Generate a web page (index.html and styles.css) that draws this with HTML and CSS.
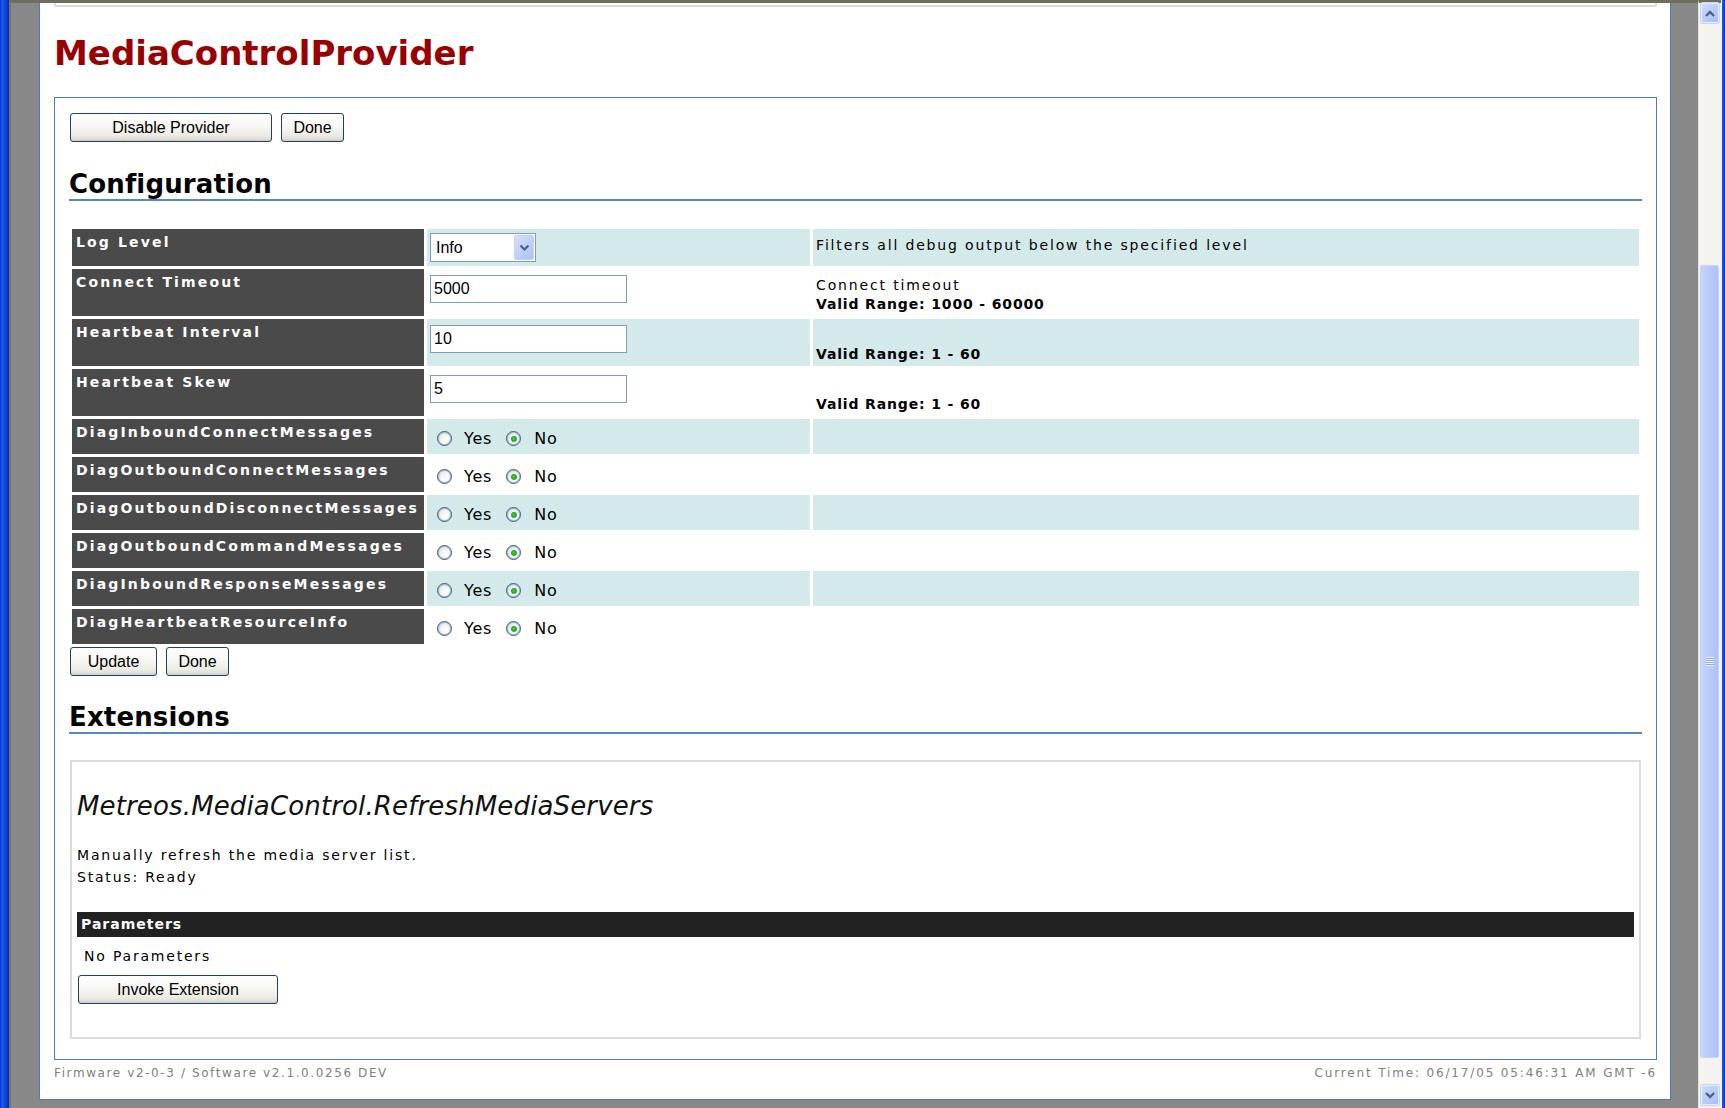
FILE: index.html
```html
<!DOCTYPE html>
<html>
<head>
<meta charset="utf-8">
<title>MediaControlProvider</title>
<link rel="stylesheet" href="styles.css">
</head>
<body>
<div class="win">
  <div class="frame-l"></div>
  <div class="viewport">
    <div class="page">
      <div class="prev-box"></div>
      <h1 class="title">MediaControlProvider</h1>
      <div class="panel">
        <div class="btn-row">
          <button class="xp-btn w-disable">Disable Provider</button>
          <button class="xp-btn w-done">Done</button>
        </div>
        <h2 class="section">Configuration</h2>
        <table class="config">
          <colgroup><col class="c-label"><col class="c-value"><col class="c-desc"></colgroup>
          <tr class="alt">
            <th>Log Level</th>
            <td class="val"><div class="select"><span class="sel-text">Info</span><span class="sel-btn"><svg width="11" height="8" viewBox="0 0 11 8"><path d="M1.5 1.5 L5.5 5.5 L9.5 1.5" fill="none" stroke="#4d6185" stroke-width="2.2"/></svg></span></div></td>
            <td class="desc">Filters all debug output below the specified level</td>
          </tr>
          <tr>
            <th>Connect Timeout</th>
            <td class="val"><input class="txt" type="text" value="5000"></td>
            <td class="desc">Connect timeout<br><b>Valid Range: 1000 - 60000</b></td>
          </tr>
          <tr class="alt">
            <th>Heartbeat Interval</th>
            <td class="val"><input class="txt" type="text" value="10"></td>
            <td class="desc"><br><b>Valid Range: 1 - 60</b></td>
          </tr>
          <tr>
            <th>Heartbeat Skew</th>
            <td class="val"><input class="txt" type="text" value="5"></td>
            <td class="desc"><br><b>Valid Range: 1 - 60</b></td>
          </tr>
          <tr class="alt">
            <th>DiagInboundConnectMessages</th>
            <td class="val rad"><div class="radios"><span class="radio first"></span><span class="opt">Yes</span><span class="radio on"></span><span class="opt">No</span></div></td>
            <td class="desc"></td>
          </tr>
          <tr>
            <th>DiagOutboundConnectMessages</th>
            <td class="val rad"><div class="radios"><span class="radio first"></span><span class="opt">Yes</span><span class="radio on"></span><span class="opt">No</span></div></td>
            <td class="desc"></td>
          </tr>
          <tr class="alt">
            <th>DiagOutboundDisconnectMessages</th>
            <td class="val rad"><div class="radios"><span class="radio first"></span><span class="opt">Yes</span><span class="radio on"></span><span class="opt">No</span></div></td>
            <td class="desc"></td>
          </tr>
          <tr>
            <th>DiagOutboundCommandMessages</th>
            <td class="val rad"><div class="radios"><span class="radio first"></span><span class="opt">Yes</span><span class="radio on"></span><span class="opt">No</span></div></td>
            <td class="desc"></td>
          </tr>
          <tr class="alt">
            <th>DiagInboundResponseMessages</th>
            <td class="val rad"><div class="radios"><span class="radio first"></span><span class="opt">Yes</span><span class="radio on"></span><span class="opt">No</span></div></td>
            <td class="desc"></td>
          </tr>
          <tr>
            <th>DiagHeartbeatResourceInfo</th>
            <td class="val rad"><div class="radios"><span class="radio first"></span><span class="opt">Yes</span><span class="radio on"></span><span class="opt">No</span></div></td>
            <td class="desc"></td>
          </tr>
        </table>
        <div class="btn-row">
          <button class="xp-btn w-update">Update</button>
          <button class="xp-btn w-done2">Done</button>
        </div>
        <h2 class="section ext-head">Extensions</h2>
        <div class="ext">
          <div class="ext-title">Metreos.MediaControl.RefreshMediaServers</div>
          <div class="ext-desc">Manually refresh the media server list.<br>Status: Ready</div>
          <div class="param-bar">Parameters</div>
          <div class="no-params">No Parameters</div>
          <button class="xp-btn w-invoke">Invoke Extension</button>
        </div>
      </div>
      <div class="footer">
        <span class="f-left">Firmware v2-0-3 / Software v2.1.0.0256 DEV</span>
        <span class="f-right">Current Time: 06/17/05 05:46:31 AM GMT -6</span>
      </div>
    </div>
  </div>
  <div class="scrollbar">
    <div class="sb-btn"><svg width="12" height="9" viewBox="0 0 12 9"><path d="M2 7 L6 3 L10 7" fill="none" stroke="#4d6185" stroke-width="2.4"/></svg></div>
    <div class="sb-thumb"><span class="grip"></span></div>
    <div class="sb-fill"></div>
    <div class="sb-btn down"><svg width="12" height="9" viewBox="0 0 12 9"><path d="M2 2 L6 6 L10 2" fill="none" stroke="#4d6185" stroke-width="2.4"/></svg></div>
  </div>
  <div class="frame-r"></div>
</div>
</body>
</html>
```

FILE: styles.css
```css
* { box-sizing: border-box; }
html, body { margin: 0; padding: 0; }
body {
  width: 1725px;
  height: 1108px;
  overflow: hidden;
  font-family: "DejaVu Sans", Verdana, sans-serif;
  color: #000;
  background: #888;
}
.win { display: flex; height: 1108px; }

.frame-l {
  width: 9px;
  background: linear-gradient(90deg, #0a2fc0 0, #1a5cf0 2px, #0d47e6 5px, #0a30c8 8px, #082a9e 9px);
}
.frame-r {
  width: 4px;
  background: linear-gradient(90deg, #f2f1ea 0, #f2f1ea 1px, #1d5ae8 1px, #0a35cc 4px);
}

.viewport {
  width: 1689px;
  background: #888;
  border-top: 3px solid #6f6d5d;
  border-left: 2px solid #76745f;
}

.page {
  margin-left: 28px;
  width: 1632px;
  background: #fff;
  border: 1px solid #4b7bc1;
  border-top: none;
}

.prev-box {
  margin: 0 13px 0 14px;
  height: 4px;
  border: 2px solid #dddddd;
  border-top: none;
}

.title {
  margin: 26px 0 0 14px;
  font-family: "DejaVu Sans", Verdana, sans-serif;
  font-weight: bold;
  font-size: 34px;
  line-height: 40px;
  color: #990000;
}

.panel {
  margin: 24px 13px 0 14px;
  border: 1px solid #4b7bc1;
  padding: 15px 15px 20px;
}

.btn-row { display: flex; gap: 9px; height: 29px; }

.xp-btn {
  height: 29px;
  padding: 0;
  border: 1px solid #1f3f6e;
  border-radius: 3px;
  background: linear-gradient(180deg, #ffffff 0%, #f7f7f3 45%, #ecebe3 80%, #d9d6cb 100%);
  font-family: "Liberation Sans", Arial, sans-serif;
  font-size: 16px;
  color: #000;
  box-shadow: inset 0 -1px 0 #d0cdc0;
}
.w-disable { width: 202px; }
.w-done { width: 63px; }
.w-update { width: 87px; }
.w-done2 { width: 63px; }
.w-invoke { width: 200px; margin: 9px 0 0 1px; display: block; }

.section {
  margin: 27px -1px 0;
  font-family: "DejaVu Sans", Verdana, sans-serif;
  font-weight: bold;
  font-size: 26px;
  line-height: 30px;
  letter-spacing: 0.15px;
  border-bottom: 2px solid #5a86c4;
}
.ext-head { margin-top: 26px; }

.config {
  margin: 25px 0 0 -1px;
  width: 1573px;
  border-spacing: 3px;
  table-layout: fixed;
}
.c-label { width: 352px; }
.c-value { width: 383px; }
.c-desc { width: 826px; }

.config th {
  background: #4a4a4a;
  color: #fff;
  text-align: left;
  vertical-align: top;
  padding: 5px 4px;
  font-family: "DejaVu Sans", Verdana, sans-serif;
  font-weight: bold;
  font-size: 14px;
  line-height: 17px;
  letter-spacing: 2.15px;
  white-space: nowrap;
  overflow: hidden;
}
.config td { vertical-align: top; padding: 0; }
.config tr.alt td { background: #d4e9e9; }

.val { padding: 4px 3px !important; }
.val.rad { padding: 10px 3px 6px !important; }

.desc {
  padding: 7px 3px 2px !important;
  font-size: 14px;
  line-height: 19px;
  letter-spacing: 1.85px;
}
.desc b { font-size: 14px; letter-spacing: 0.85px; }

.select {
  width: 106px;
  height: 29px;
  border: 1px solid #7f9db9;
  background: #fff;
  display: flex;
}
.sel-text {
  flex: 1;
  padding-left: 5px;
  font-family: "Liberation Sans", Arial, sans-serif;
  font-size: 16px;
  line-height: 27px;
}
.sel-btn {
  width: 20px;
  margin: 1px;
  border: 1px solid #c3d3f7;
  border-radius: 2px;
  background: linear-gradient(135deg, #d6e2fe 0%, #bccefa 55%, #adc3f5 100%);
  display: flex;
  align-items: center;
  justify-content: center;
}

.txt {
  display: block;
  margin-top: 2px;
  width: 197px;
  height: 28px;
  border: 1px solid #7f9db9;
  padding: 0 3px;
  font-family: "Liberation Sans", Arial, sans-serif;
  font-size: 16px;
  color: #000;
  background: #fff;
}

.radios {
  display: flex;
  align-items: center;
  height: 19px;
  font-size: 16px;
  letter-spacing: 0.8px;
}
.radio {
  width: 15px;
  height: 15px;
  border-radius: 50%;
  border: 1px solid #2f5a8c;
  box-shadow: inset 0 0 0 1px #a9bcd3;
  background: radial-gradient(circle at 65% 65%, #ffffff 0%, #f4f3ee 45%, #d6d4ca 100%);
  margin-left: 14px;
  display: flex;
  align-items: center;
  justify-content: center;
}
.radio.first { margin-left: 7px; }
.radio.on::after {
  content: "";
  width: 6px;
  height: 6px;
  border-radius: 50%;
  background: radial-gradient(circle at 45% 45%, #4cd04c 0%, #21a121 55%, #8fd98f 100%);
}
.opt { margin-left: 12px; }
.radio + .opt + .radio + .opt { margin-left: 13px; }

.ext {
  margin-top: 26px;
  border: 2px solid #dcdcdc;
  padding: 29px 5px 33px 5px;
}
.ext-title {
  font-family: "DejaVu Sans", Verdana, sans-serif;
  font-style: italic;
  font-size: 26px;
  line-height: 30px;
  letter-spacing: 0.14px;
  color: #111;
}
.ext-desc {
  margin-top: 23px;
  font-size: 14px;
  line-height: 22px;
  letter-spacing: 1.8px;
}
.param-bar {
  margin-top: 24px;
  height: 25px;
  background: #222;
  color: #fff;
  font-weight: bold;
  font-size: 14px;
  line-height: 25px;
  letter-spacing: 1px;
  padding-left: 4px;
}
.no-params {
  margin: 9px 0 0 7px;
  font-size: 14px;
  line-height: 20px;
  letter-spacing: 1.8px;
}

.footer {
  display: flex;
  justify-content: space-between;
  margin: 5px 13px 0 14px;
  padding-bottom: 18px;
  font-size: 12px;
  line-height: 16px;
  color: #808080;
}
.f-left { letter-spacing: 1.6px; }
.f-right { letter-spacing: 1.85px; }

.scrollbar {
  width: 23px;
  background: #f4f3ee;
  border-top: 3px solid #6f6d5d;
  border-left: 1px solid #e2e1da;
  display: flex;
  flex-direction: column;
}
.sb-btn {
  width: 18px;
  height: 20px;
  margin-left: 2px;
  border: 1px solid #e4ecfd;
  border-radius: 2px;
  background: linear-gradient(135deg, #cddbfd 0%, #b9cbf8 55%, #a6bdf4 100%);
  display: flex;
  align-items: center;
  justify-content: center;
  box-shadow: 0 0 0 1px #c7d5f5;
}
.sb-btn.down { margin-bottom: 3px; }
.sb-thumb {
  margin: 242px 0 0 1px;
  width: 19px;
  height: 793px;
  border: 1px solid #c5d4f8;
  border-radius: 2px;
  background: linear-gradient(90deg, #c4d4fc 0%, #b8cbfa 50%, #adc2f6 100%);
  display: flex;
  align-items: center;
  justify-content: center;
}
.grip {
  width: 8px;
  height: 9px;
  background: repeating-linear-gradient(180deg, #eef3ff 0, #eef3ff 1px, #8ea8e8 1px, #8ea8e8 2px);
}
.sb-fill { flex: 1; }
```
